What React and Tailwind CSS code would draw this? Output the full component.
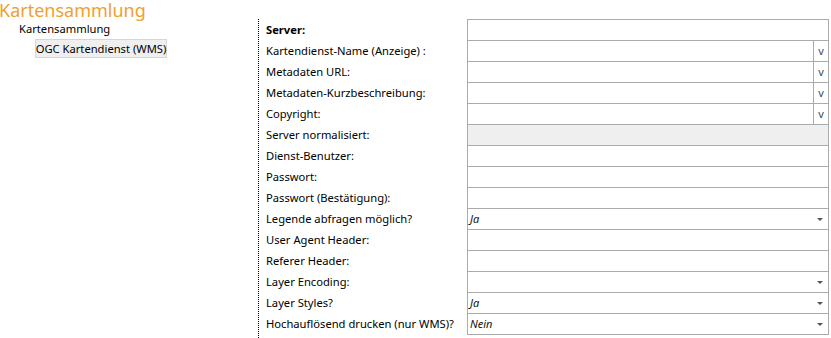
import React from "react";

const rows = [
  { label: "Server:", bold: true, type: "text" },
  { label: "Kartendienst-Name (Anzeige) :", type: "v" },
  { label: "Metadaten URL:", type: "v" },
  { label: "Metadaten-Kurzbeschreibung:", type: "v" },
  { label: "Copyright:", type: "v" },
  { label: "Server normalisiert:", type: "disabled" },
  { label: "Dienst-Benutzer:", type: "text" },
  { label: "Passwort:", type: "text" },
  { label: "Passwort (Bestätigung):", type: "text" },
  { label: "Legende abfragen möglich?", type: "select", value: "Ja" },
  { label: "User Agent Header:", type: "text" },
  { label: "Referer Header:", type: "text" },
  { label: "Layer Encoding:", type: "select", value: "" },
  { label: "Layer Styles?", type: "select", value: "Ja" },
  { label: "Hochauflösend drucken (nur WMS)?", type: "select", value: "Nein" },
];

function Arrow() {
  return (
    <svg width="6" height="4" viewBox="0 0 6 4" className="mr-[5px] mt-[2px]">
      <path d="M0 0 H6 L3 3 Z" fill="#555" />
    </svg>
  );
}

export default function App() {
  return (
    <div
      className="flex w-[831px] h-[338px] bg-white text-[11.2px] text-black overflow-hidden"
      style={{ fontFamily: '"Noto Sans", "Open Sans", sans-serif' }}
    >
      <div className="w-[258px] shrink-0">
        <div className="text-[18px] leading-[21px] text-[#f0a030] ml-[-1px]">Kartensammlung</div>
        <div className="pl-[19px] leading-[14px] mt-[1px]">Kartensammlung</div>
        <div className="pl-[35px] mt-[3px]">
          <div className="inline-flex items-center justify-center w-[132px] h-[19px] bg-[#efefef] border border-[#d6d6d6] leading-none whitespace-nowrap">
            OGC Kartendienst (WMS)
          </div>
        </div>
      </div>
      <div className="mt-[19px] flex border-l border-dotted border-black h-[319px]">
        <div className="w-[208px] pl-[7px] pt-px">
          {rows.map((r, i) => (
            <div key={i} className={`h-[21px] flex items-center whitespace-nowrap ${r.bold ? "font-bold" : ""}`}>
              {r.label}
            </div>
          ))}
        </div>
        <div className="w-[362px] self-start border-t border-l border-r border-[#ababab]">
          {rows.map((r, i) => (
            <div
              key={i}
              className={`h-[21px] flex items-center border-b border-[#ababab] ${r.type === "disabled" ? "bg-[#efefef]" : "bg-white"}`}
            >
              {r.type === "v" ? (
                <>
                  <div className="flex-1 h-full" />
                  <div className="w-[15px] h-full border-l border-[#ababab] flex items-center justify-center text-[11px] text-[#3a4a6a]">
                    v
                  </div>
                </>
              ) : r.type === "select" ? (
                <>
                  <div className="flex-1 pl-[2px] italic text-[11px] text-[#111]">{r.value}</div>
                  <Arrow />
                </>
              ) : null}
            </div>
          ))}
        </div>
      </div>
    </div>
  );
}
